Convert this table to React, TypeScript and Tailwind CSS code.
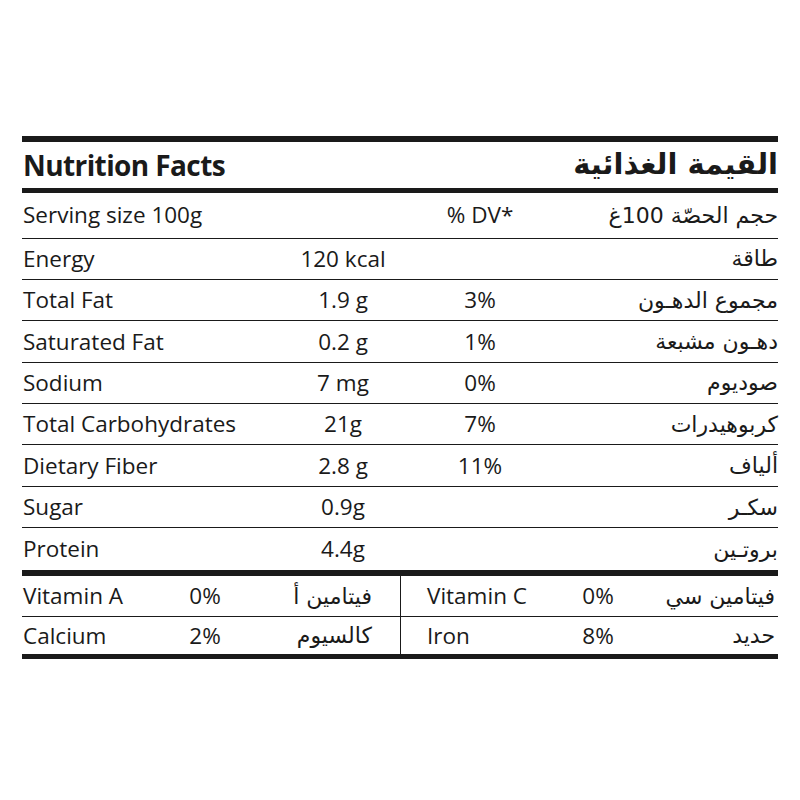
const rows = [
  { en: "Energy", amt: "120 kcal", dv: "", ar: "طاقة" },
  { en: "Total Fat", amt: "1.9 g", dv: "3%", ar: "مجموع الدهـون" },
  { en: "Saturated Fat", amt: "0.2 g", dv: "1%", ar: "دهـون مشبعة" },
  { en: "Sodium", amt: "7 mg", dv: "0%", ar: "صوديوم" },
  { en: "Total Carbohydrates", amt: "21g", dv: "7%", ar: "كربوهيدرات" },
  { en: "Dietary Fiber", amt: "2.8 g", dv: "11%", ar: "ألياف" },
  { en: "Sugar", amt: "0.9g", dv: "", ar: "سكـر" },
  { en: "Protein", amt: "4.4g", dv: "", ar: "بروتـين" },
];

const en = "font-['Open_Sans','DejaVu_Sans',sans-serif] text-[22.5px]";
const ar = "font-['DejaVu_Sans',sans-serif] text-[22px]";

function Row({
  r,
  last,
}: {
  r: { en: string; amt: string; dv: string; ar: string };
  last: boolean;
}) {
  return (
    <div
      className={`grid grid-cols-[250px_142px_132px_1fr] items-center ${
        last ? "h-[42px]" : "h-[41.4px] border-b-[1.5px] border-[#1a1a1a]"
      }`}
    >
      <span className={`${en} pl-px`}>{r.en}</span>
      <span className={`${en} text-center`}>{r.amt}</span>
      <span className={`${en} text-center`}>{r.dv}</span>
      <span dir="rtl" className={`${ar} text-right`}>
        {r.ar}
      </span>
    </div>
  );
}

export default function App() {
  return (
    <div className="min-h-[800px] bg-white text-[#1a1a1a] pt-[136px] pl-[22px]">
      <div className="w-[756px]">
        <div className="h-[6px] bg-[#1a1a1a]" />
        <div className="h-[46px] flex items-center justify-between">
          <span className="font-['Open_Sans','DejaVu_Sans',sans-serif] text-[28px] font-bold tracking-[-0.6px] pl-px">
            Nutrition Facts
          </span>
          <span dir="rtl" className="font-['DejaVu_Sans',sans-serif] text-[29px] font-bold">
            القيمة الغذائية
          </span>
        </div>
        <div className="h-[5px] bg-[#1a1a1a]" />
        <div className="grid grid-cols-[250px_142px_132px_1fr] items-center h-[45.5px] border-b-[1.5px] border-[#1a1a1a]">
          <span className={`${en} pl-px`}>Serving size 100g</span>
          <span />
          <span className={`${en} text-center`}>% DV*</span>
          <span dir="rtl" className={`${ar} text-right`}>
            حجم الحصّة 100غ
          </span>
        </div>
        {rows.map((r, i) => (
          <Row key={r.en} r={r} last={i === rows.length - 1} />
        ))}
        <div className="h-[6px] bg-[#1a1a1a]" />
        <div className="grid grid-cols-2">
          <div>
            <div className="grid grid-cols-[143px_80px_1fr] items-center h-[41px] border-b-[1.5px] border-[#1a1a1a]">
              <span className={`${en} pl-px`}>Vitamin A</span>
              <span className={`${en} text-center`}>0%</span>
              <span dir="rtl" className={`${ar} pr-[28px]`}>
                فيتامين أ
              </span>
            </div>
            <div className="grid grid-cols-[143px_80px_1fr] items-center h-[37px]">
              <span className={`${en} pl-px`}>Calcium</span>
              <span className={`${en} text-center`}>2%</span>
              <span dir="rtl" className={`${ar} pr-[28px]`}>
                كالسيوم
              </span>
            </div>
          </div>
          <div className="border-l-[1.5px] border-[#1a1a1a]">
            <div className="grid grid-cols-[131px_80px_1fr] items-center h-[41px] pl-[26px] border-b-[1.5px] border-[#1a1a1a]">
              <span className={en}>Vitamin C</span>
              <span className={`${en} text-center`}>0%</span>
              <span dir="rtl" className={`${ar} pr-[3px]`}>
                فيتامين سي
              </span>
            </div>
            <div className="grid grid-cols-[131px_80px_1fr] items-center h-[37px] pl-[26px]">
              <span className={en}>Iron</span>
              <span className={`${en} text-center`}>8%</span>
              <span dir="rtl" className={`${ar} pr-[3px]`}>
                حديد
              </span>
            </div>
          </div>
        </div>
        <div className="h-[5px] bg-[#1a1a1a]" />
      </div>
    </div>
  );
}
